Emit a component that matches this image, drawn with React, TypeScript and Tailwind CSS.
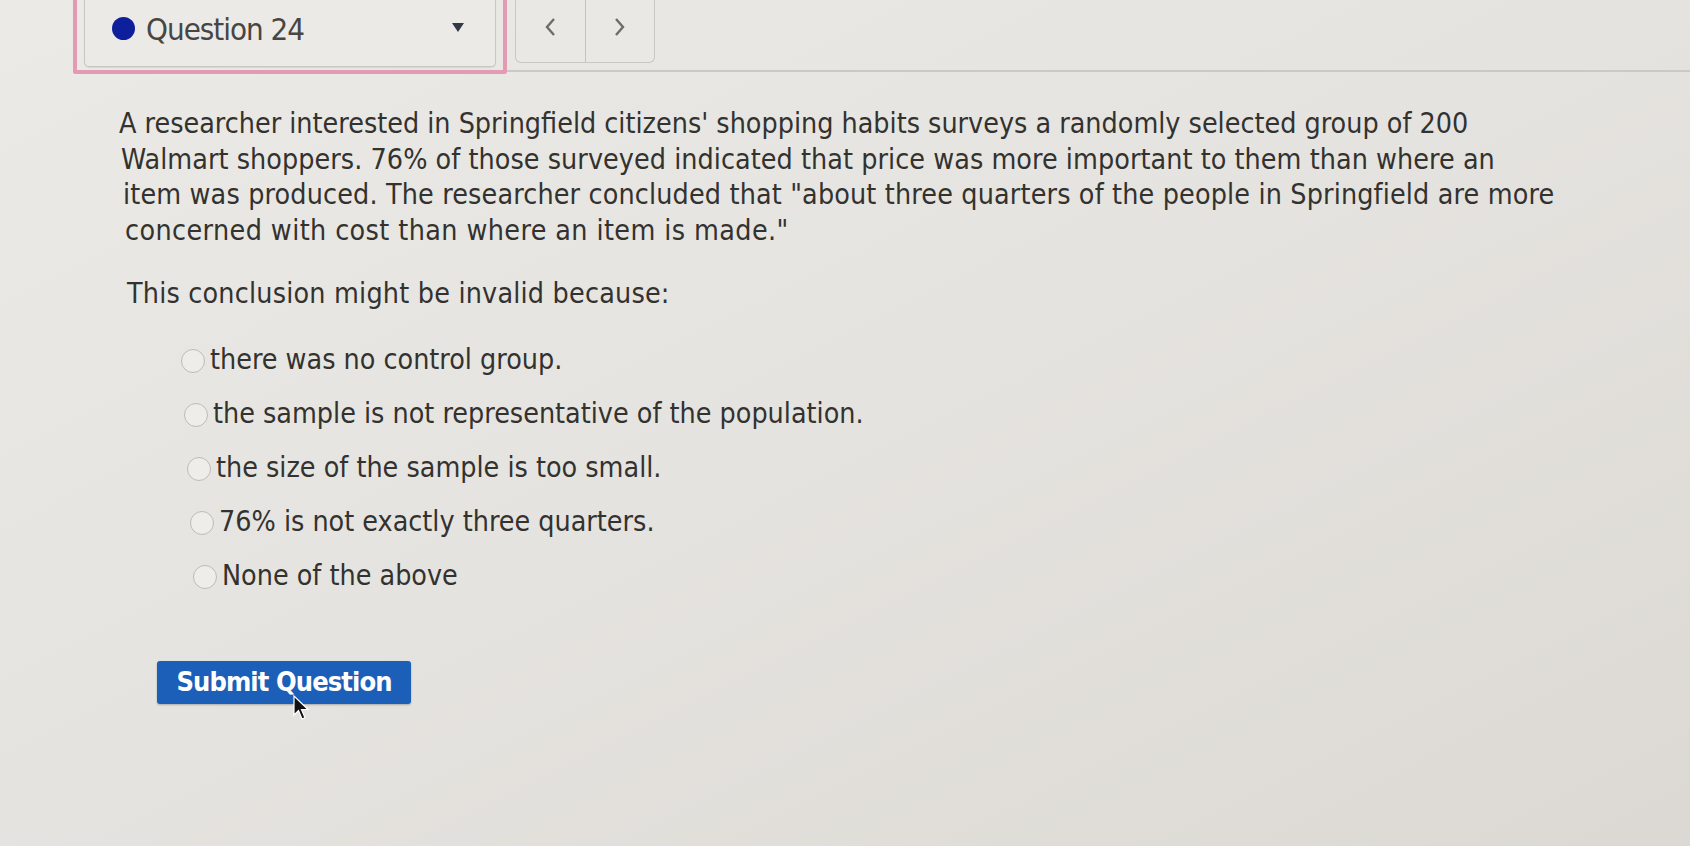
import React from "react";

const options = [
  "there was no control group.",
  "the sample is not representative of the population.",
  "the size of the sample is too small.",
  "76% is not exactly three quarters.",
  "None of the above",
];

const lines = [
  { t: "A researcher interested in Springfield citizens' shopping habits surveys a randomly selected group of 200", ls: 0 },
  { t: "Walmart shoppers. 76% of those surveyed indicated that price was more important to them than where an", ls: 0.05 },
  { t: "item was produced. The researcher concluded that \"about three quarters of the people in Springfield are more", ls: 0.15 },
  { t: "concerned with cost than where an item is made.\"", ls: 0.4 },
];

export default function App() {
  return (
    <div
      className="w-[1690px] h-[846px] overflow-hidden bg-gradient-to-br from-[#ebeae6] via-[#e5e3df] to-[#dcd9d4] text-[#33322f]"
      style={{ fontFamily: '"DejaVu Sans", "Liberation Sans", sans-serif', fontStretch: "condensed" }}
    >
      {/* header */}
      <div className="flex items-start h-[76px]">
        <div className="ml-[73px] w-[434px] h-[74px] border-[4px] border-t-0 border-[#e39ab4] rounded-b-[3px] px-[7px] pb-[3px]">
          <div className="h-[67px] border border-t-0 border-[#c9c7c3] rounded-b-[5px] bg-[#eceae7] flex items-start pt-[10px] pl-[27px] pr-[30px] shadow-[0_1px_1px_rgba(0,0,0,0.08)]">
            <span className="w-[23px] h-[23px] rounded-full bg-[#0d1f9a] mr-[11px] mt-[7px]" />
            <span className="text-[31px] leading-[38px] tracking-[-1px] text-[#474643]">Question 24</span>
            <span className="ml-auto mt-[12px]">
              <svg width="14" height="11" viewBox="0 0 14 11">
                <path d="M1 1 L13 1 L7 10 Z" fill="#2f3a44" />
              </svg>
            </span>
          </div>
        </div>
        <div className="flex flex-col flex-1">
          <div className="flex ml-[8px] w-[140px] h-[63px] border border-t-0 border-[#c9c7c3] rounded-b-[6px] bg-[#e9e8e5]">
            <div className="flex-1 flex items-center justify-center border-r border-[#c5c3bf] pb-[8px]">
              <svg width="14" height="22" viewBox="0 0 14 22">
                <path d="M11 3 L4 11 L11 19" fill="none" stroke="#6d6c69" strokeWidth="2.4" />
              </svg>
            </div>
            <div className="flex-1 flex items-center justify-center pb-[8px]">
              <svg width="14" height="22" viewBox="0 0 14 22">
                <path d="M3 3 L10 11 L3 19" fill="none" stroke="#6d6c69" strokeWidth="2.4" />
              </svg>
            </div>
          </div>
          <div className="h-[2px] bg-[#cbc9c5] mt-[7px]" />
        </div>
      </div>

      {/* question */}
      <div className="pl-[119px] pt-[30px]">
        <p className="text-[28.4px] leading-[35.5px]">
          {lines.map((l, i) => (
            <span key={i} className="block whitespace-nowrap" style={{ paddingLeft: `${i * 2}px`, letterSpacing: `${l.ls}px` }}>
              {l.t}
            </span>
          ))}
        </p>
        <p className="text-[28.4px] leading-[35.5px] mt-[28px] pl-[8px] tracking-[0.2px]">This conclusion might be invalid because:</p>

        <div className="mt-[31px] pl-[62px] flex flex-col gap-[18px]">
          {options.map((o, i) => (
            <label key={i} className="flex items-center h-[36px] text-[28.4px]" style={{ paddingLeft: `${i * 3}px` }}>
              <span className="w-[24px] h-[24px] rounded-full border-[1.5px] border-[#bdbbb7] bg-[#eeede9] mr-[5px] shrink-0" />
              <span>{o}</span>
            </label>
          ))}
        </div>

        <div className="mt-[66px] pl-[38px]">
          <button className="relative h-[43px] w-[254px] bg-[#1b5fb8] rounded-[3px] text-white text-[27px] font-semibold tracking-[-0.9px] flex items-center justify-center shadow-[0_1px_2px_rgba(0,0,0,0.25)]">
            Submit Question
            <svg className="absolute left-[136px] top-[34px]" width="18" height="26" viewBox="0 0 18 26">
              <path d="M1 1 L1 20 L5.5 15.5 L9 24 L12 22.7 L8.5 14.5 L15 14.5 Z" fill="#111" stroke="#fff" strokeWidth="1.2" />
            </svg>
          </button>
        </div>
      </div>
    </div>
  );
}
